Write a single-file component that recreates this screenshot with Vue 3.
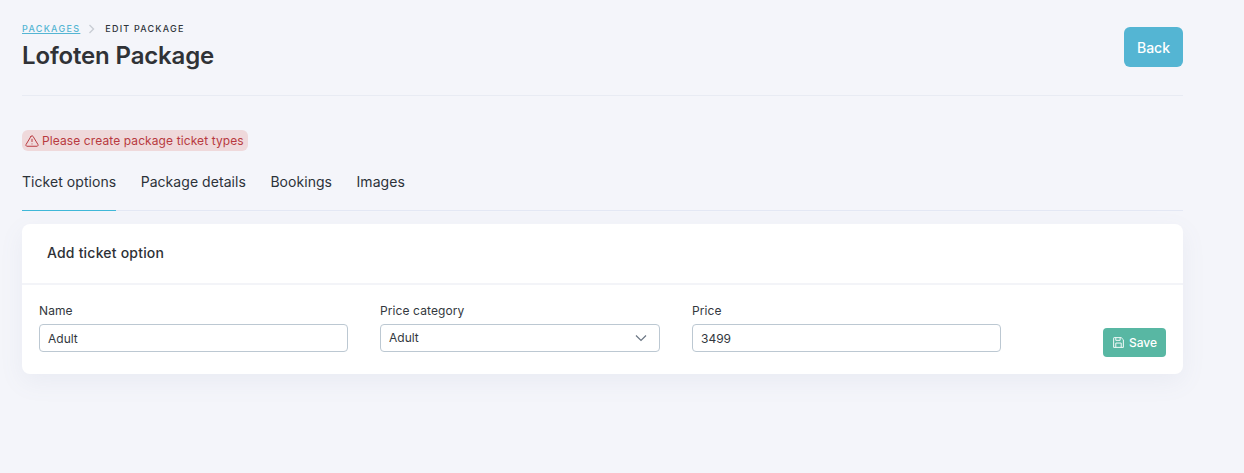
<script setup>
const tabs = ['Ticket options', 'Package details', 'Bookings', 'Images']
</script>

<template>
  <div class="page">
    <header class="head">
      <div>
        <nav class="crumbs">
          <a class="crumb-link">PACKAGES</a>
          <svg class="chev" width="8" height="10" viewBox="0 0 8 10" fill="none"><path d="M1.5 1l4 4-4 4" stroke="#c9cdd4" stroke-width="1.4"/></svg>
          <span class="crumb-current">EDIT PACKAGE</span>
        </nav>
        <h1 class="title">Lofoten Package</h1>
      </div>
      <button class="back">Back</button>
    </header>

    <div class="alert">
      <svg width="14" height="14" viewBox="0 0 24 24" fill="none" stroke="#b8393f" stroke-width="1.7" stroke-linecap="round" stroke-linejoin="round"><path d="M10.3 3.9 1.8 18a2 2 0 0 0 1.7 3h17a2 2 0 0 0 1.7-3L13.7 3.9a2 2 0 0 0-3.4 0z"/><path d="M12 9v4"/><path d="M12 17h.01"/></svg>
      <span>Please create package ticket types</span>
    </div>

    <div class="tabs">
      <div v-for="(t, i) in tabs" :key="t" class="tab" :class="{ active: i === 0 }">{{ t }}</div>
    </div>

    <section class="card">
      <div class="card-head">Add ticket option</div>
      <div class="card-body">
        <label class="field f-name">
          <span class="lab">Name</span>
          <div class="input">Adult</div>
        </label>
        <label class="field f-cat">
          <span class="lab">Price category</span>
          <div class="input select">
            <span class="select-value">Adult</span>
            <svg width="12" height="8" viewBox="0 0 12 8" fill="none"><path d="M1 1.5l5 5 5-5" stroke="#6b7684" stroke-width="1.2"/></svg>
          </div>
        </label>
        <label class="field f-price">
          <span class="lab">Price</span>
          <div class="input">3499</div>
        </label>
        <button class="save">
          <svg width="13" height="13" viewBox="0 0 24 24" fill="none" stroke="#fff" stroke-width="1.7" stroke-linejoin="round"><path d="M4 3h13l4 4v14H3V4a1 1 0 0 1 1-1z"/><path d="M7 21v-8h10v8"/><path d="M7 3v5h8V3"/></svg>
          <span>Save</span>
        </button>
      </div>
    </section>
  </div>
</template>

<style>
html, body { margin: 0; background: #f4f5fa; }
</style>

<style scoped>
.page {
  width: 1161px;
  margin-left: 22px;
  height: 473px;
  font-family: Inter, "Liberation Sans", sans-serif;
  color: #2e3238;
}
.head {
  border-bottom: 1px solid #e8ebf3;
  display: flex;
  justify-content: space-between;
  align-items: flex-start;
  padding-top: 22px;
  height: 73px;
}
.crumbs {
  display: flex;
  align-items: center;
  height: 13px;
  font-size: 9px;
  font-weight: 500;
  letter-spacing: 1.3px;
}
.crumb-link { color: #54b5d3; text-decoration: underline; }
.chev { margin: 0 9px 0 8px; }
.crumb-current { color: #30353c; letter-spacing: 1.2px; }
.title {
  margin: 5px 0 0;
  font-size: 24px;
  line-height: 32px;
  font-weight: 600;
  color: #303236;
  letter-spacing: -0.15px;
}
.back {
  margin-top: 5px;
  width: 59px;
  height: 40px;
  border: 0;
  border-radius: 6px;
  background: #54b5d3;
  color: #fff;
  font: 500 14px Inter, sans-serif;
}
.alert {
  margin-top: 34px;
  width: 226px;
  height: 21px;
  box-sizing: border-box;
  display: flex;
  align-items: center;
  gap: 3px;
  padding-left: 3px;
  border-radius: 6px;
  background: #efd9db;
  color: #b8393f;
  font-size: 12px;
  white-space: nowrap;
  letter-spacing: 0.1px;
}
.tabs {
  display: flex;
  gap: 24.5px;
  margin-top: 10px;
  height: 49px;
  border-bottom: 1px solid #e4e8f4;
}
.tab {
  height: 49px;
  line-height: 42px;
  font-size: 14px;
  color: #2c3239;
  white-space: nowrap;
  letter-spacing: 0.05px;
}
.tab.active { border-bottom: 1px solid #40b8d8; }
.card {
  margin-top: 13px;
  height: 150px;
  background: #fff;
  border-radius: 8px;
  box-shadow: 0 8px 24px rgba(120, 130, 160, 0.08);
}
.card-head {
  height: 59px;
  line-height: 58px;
  padding-left: 25px;
  border-bottom: 2px solid #f3f4f8;
  font-size: 14px;
  font-weight: 500;
  color: #2e3136;
  letter-spacing: 0.2px;
}
.card-body {
  display: flex;
  padding: 17px 17px 0;
}
.field { display: flex; flex-direction: column; }
.f-name { width: 309px; margin-right: 32px; }
.f-cat { width: 280px; margin-right: 32px; }
.f-price { width: 309px; }
.lab {
  font-size: 12px;
  line-height: 17px;
  margin-bottom: 5px;
  color: #33383e;
  letter-spacing: 0.1px;
}
.input {
  height: 28px;
  box-sizing: border-box;
  border: 1px solid #bcc8d2;
  border-radius: 4px;
  padding: 0 8px;
  line-height: 27px;
  font-size: 12px;
  color: #33383e;
}
.select {
  display: flex;
  justify-content: space-between;
  align-items: center;
  padding-right: 12px;
}
.select-value { line-height: 25px; margin-bottom: 2px; }
.save {
  margin: 26px 0 0 102px;
  width: 63px;
  height: 29px;
  display: flex;
  align-items: center;
  justify-content: center;
  gap: 4px;
  padding: 0;
  border: 0;
  border-radius: 4px;
  background: #58b7a3;
  color: #fff;
  font: 500 12px Inter, sans-serif;
}
</style>
